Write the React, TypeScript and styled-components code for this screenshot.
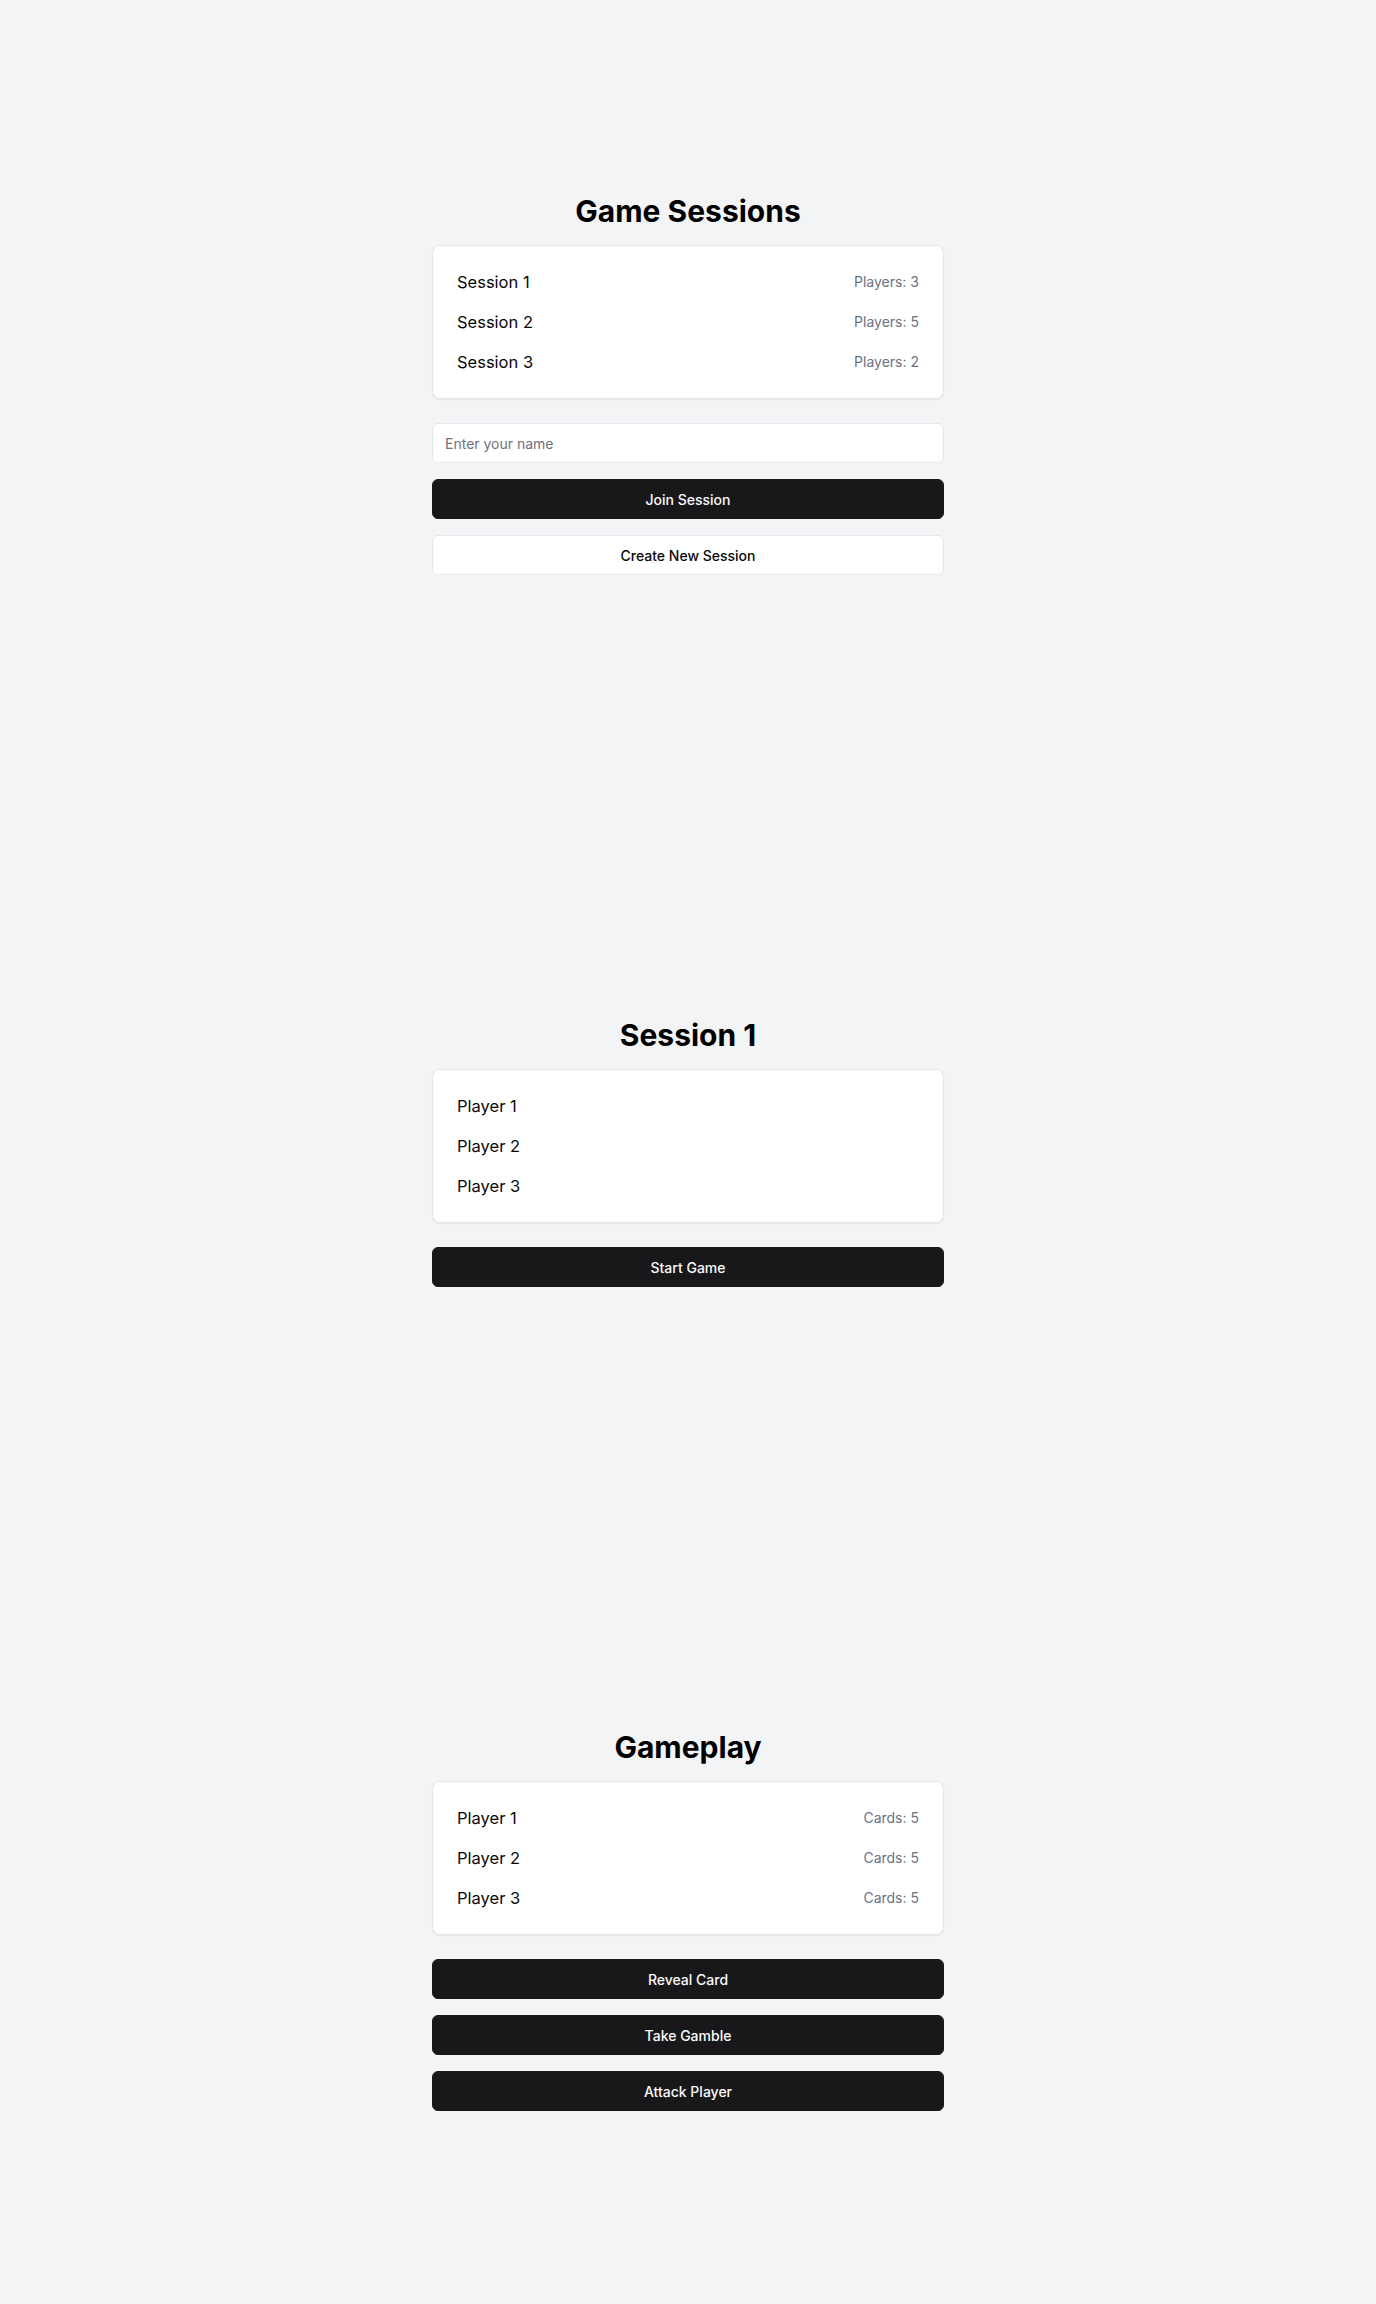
import React from "react";
import styled, { createGlobalStyle } from "styled-components";

const GlobalStyle = createGlobalStyle`
  * { box-sizing: border-box; }
  html, body {
    margin: 0;
    padding: 0;
    background: #f3f4f6;
    font-family: Inter, "Noto Sans", "Liberation Sans", sans-serif;
    color: #09090b;
  }
`;

const Page = styled.main`
  display: flex;
  flex-direction: column;
`;

const Section = styled.section`
  height: 768px;
  display: flex;
  align-items: center;
  justify-content: center;
`;

const Panel = styled.div`
  width: 512px;
  display: flex;
  flex-direction: column;
`;

const Title = styled.h1`
  margin: 0 0 16px;
  font-size: 30px;
  line-height: 36px;
  font-weight: 700;
  text-align: center;
  color: #000;
`;

const Card = styled.div`
  background: #ffffff;
  border: 1px solid #e5e7eb;
  border-radius: 8px;
  box-shadow: 0 1px 2px rgba(0, 0, 0, 0.06);
  padding: 24px;
  display: flex;
  flex-direction: column;
  gap: 16px;
`;

const Row = styled.div`
  display: flex;
  align-items: center;
  justify-content: space-between;
`;

const Name = styled.span`
  font-size: 16.5px;
  line-height: 24px;
  font-weight: 400;
  color: #09090b;
`;

const Meta = styled.span`
  font-size: 14px;
  line-height: 20px;
  color: #6b7280;
`;

const Actions = styled.div`
  margin-top: 24px;
  display: flex;
  flex-direction: column;
  gap: 16px;
`;

const Input = styled.input`
  height: 40px;
  width: 100%;
  padding: 0 12px;
  border: 1px solid #e5e7eb;
  border-radius: 6px;
  background: #ffffff;
  font-family: inherit;
  font-size: 14px;
  color: #09090b;
  outline: none;
  &::placeholder {
    color: #71717a;
  }
`;

const Button = styled.button<{ $variant?: "primary" | "outline" }>`
  height: 40px;
  width: 100%;
  border-radius: 6px;
  font-family: inherit;
  font-size: 14px;
  font-weight: 500;
  cursor: pointer;
  border: 1px solid ${(p) => (p.$variant === "outline" ? "#e5e7eb" : "#18181b")};
  background: ${(p) => (p.$variant === "outline" ? "#ffffff" : "#18181b")};
  color: ${(p) => (p.$variant === "outline" ? "#09090b" : "#fafafa")};
`;

const sessions = [
  { name: "Session 1", players: 3 },
  { name: "Session 2", players: 5 },
  { name: "Session 3", players: 2 },
];

const players = ["Player 1", "Player 2", "Player 3"];

export default function App() {
  return (
    <>
      <GlobalStyle />
      <Page>
        <Section>
          <Panel>
            <Title>Game Sessions</Title>
            <Card>
              {sessions.map((s) => (
                <Row key={s.name}>
                  <Name>{s.name}</Name>
                  <Meta>Players: {s.players}</Meta>
                </Row>
              ))}
            </Card>
            <Actions>
              <Input placeholder="Enter your name" />
              <Button>Join Session</Button>
              <Button $variant="outline">Create New Session</Button>
            </Actions>
          </Panel>
        </Section>
        <Section>
          <Panel>
            <Title>Session 1</Title>
            <Card>
              {players.map((p) => (
                <Row key={p}>
                  <Name>{p}</Name>
                </Row>
              ))}
            </Card>
            <Actions>
              <Button>Start Game</Button>
            </Actions>
          </Panel>
        </Section>
        <Section>
          <Panel>
            <Title>Gameplay</Title>
            <Card>
              {players.map((p) => (
                <Row key={p}>
                  <Name>{p}</Name>
                  <Meta>Cards: 5</Meta>
                </Row>
              ))}
            </Card>
            <Actions>
              <Button>Reveal Card</Button>
              <Button>Take Gamble</Button>
              <Button>Attack Player</Button>
            </Actions>
          </Panel>
        </Section>
      </Page>
    </>
  );
}
